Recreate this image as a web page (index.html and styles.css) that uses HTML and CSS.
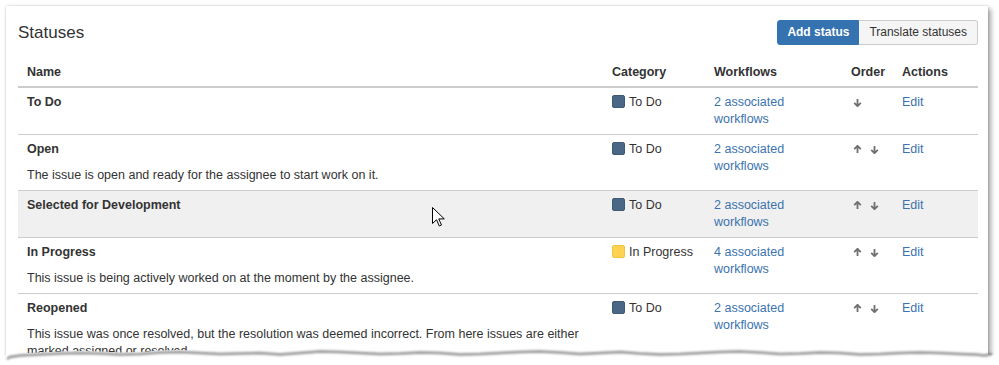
FILE: index.html
```html
<!DOCTYPE html>
<html lang="en">
<head>
    <meta charset="UTF-8">
    <title>Statuses</title>
    <link rel="stylesheet" href="styles.css">
</head>
<body>

    <div class="frame">
        <div class="card">
            <div class="page-header">
                <h2>Statuses</h2>
                <div class="buttons">
                    <button class="btn btn-primary">Add status</button>
                    <button class="btn">Translate statuses</button>
                </div>
            </div>

            <table class="statuses">
                <colgroup>
                    <col class="c-name">
                    <col class="c-cat">
                    <col class="c-wf">
                    <col class="c-order">
                    <col class="c-act">
                </colgroup>
                <thead>
                    <tr>
                        <th>Name</th>
                        <th>Category</th>
                        <th>Workflows</th>
                        <th>Order</th>
                        <th>Actions</th>
                    </tr>
                </thead>
                <tbody>
                    <tr>
                        <td><strong>To Do</strong></td>
                        <td><span class="cat todo"></span>To Do</td>
                        <td class="workflows"><a href="#">2 associated workflows</a></td>
                        <td class="order">
                            <svg class="arrow" viewBox="0 0 9 9"><path d="M4.5 1v7.5M1.2 4.8L4.5 8.2 7.8 4.8"/></svg>
                        </td>
                        <td><a href="#">Edit</a></td>
                    </tr>
                    <tr>
                        <td>
                            <strong>Open</strong>
                            <div class="desc">The issue is open and ready for the assignee to start work on it.</div>
                        </td>
                        <td><span class="cat todo"></span>To Do</td>
                        <td class="workflows"><a href="#">2 associated workflows</a></td>
                        <td class="order">
                            <svg class="arrow" viewBox="0 0 9 9"><path d="M4.5 8V0.5M1.2 4.2L4.5 0.8 7.8 4.2"/></svg>
                            <svg class="arrow" viewBox="0 0 9 9"><path d="M4.5 1v7.5M1.2 4.8L4.5 8.2 7.8 4.8"/></svg>
                        </td>
                        <td><a href="#">Edit</a></td>
                    </tr>
                    <tr class="hover">
                        <td><strong>Selected for Development</strong></td>
                        <td><span class="cat todo"></span>To Do</td>
                        <td class="workflows"><a href="#">2 associated workflows</a></td>
                        <td class="order">
                            <svg class="arrow" viewBox="0 0 9 9"><path d="M4.5 8V0.5M1.2 4.2L4.5 0.8 7.8 4.2"/></svg>
                            <svg class="arrow" viewBox="0 0 9 9"><path d="M4.5 1v7.5M1.2 4.8L4.5 8.2 7.8 4.8"/></svg>
                        </td>
                        <td><a href="#">Edit</a></td>
                    </tr>
                    <tr>
                        <td>
                            <strong>In Progress</strong>
                            <div class="desc">This issue is being actively worked on at the moment by the assignee.</div>
                        </td>
                        <td><span class="cat inprogress"></span>In Progress</td>
                        <td class="workflows"><a href="#">4 associated workflows</a></td>
                        <td class="order">
                            <svg class="arrow" viewBox="0 0 9 9"><path d="M4.5 8V0.5M1.2 4.2L4.5 0.8 7.8 4.2"/></svg>
                            <svg class="arrow" viewBox="0 0 9 9"><path d="M4.5 1v7.5M1.2 4.8L4.5 8.2 7.8 4.8"/></svg>
                        </td>
                        <td><a href="#">Edit</a></td>
                    </tr>
                    <tr>
                        <td>
                            <strong>Reopened</strong>
                            <div class="desc">This issue was once resolved, but the resolution was deemed incorrect. From here issues are either marked assigned or resolved.</div>
                        </td>
                        <td><span class="cat todo"></span>To Do</td>
                        <td class="workflows"><a href="#">2 associated workflows</a></td>
                        <td class="order">
                            <svg class="arrow" viewBox="0 0 9 9"><path d="M4.5 8V0.5M1.2 4.2L4.5 0.8 7.8 4.2"/></svg>
                            <svg class="arrow" viewBox="0 0 9 9"><path d="M4.5 1v7.5M1.2 4.8L4.5 8.2 7.8 4.8"/></svg>
                        </td>
                        <td><a href="#">Edit</a></td>
                    </tr>
                </tbody>
            </table>
        </div>
    </div>

    <!-- mouse pointer over the hovered row -->
    <svg class="cursor" width="13" height="20" viewBox="0 0 13 20">
        <path d="M0.5 0.5v16l4-3.8 2.8 6.3 2.2-1-2.8-6.1h5.6z" fill="#fff" stroke="#000" stroke-width="1" stroke-linejoin="round"/>
    </svg>

    <!-- torn paper edge at the bottom of the screenshot -->
    <svg class="torn" width="999" height="27" viewBox="0 0 999 27">
        <defs>
            <filter id="soft" x="-5%" y="-100%" width="110%" height="300%">
                <feGaussianBlur stdDeviation="1.3"/>
            </filter>
        </defs>
        <path fill="#fff" d="M0 18L10 17 20 15.5 40 14.5 60 13.5 80 13 100 13.5 120 14.5 140 14 160 12.5 180 12 200 13 220 14 240 13.5 260 13 280 14.5 300 13 320 11.5 340 12 360 13 380 14 400 13.5 420 12.5 440 13 460 14.5 480 14 500 13 520 12 540 11.5 560 12.5 580 14 600 13 620 12 640 13.5 660 14.5 680 14 700 13 720 12 740 11.5 760 12.5 780 14 800 13.5 820 12.5 840 13 860 14.5 880 14 900 13 920 12.5 940 13 960 14 975 14.5 985 15.5 990 17 999 17V27H0z"/>
        <path class="torn-shadow" filter="url(#soft)" d="M7 19L10 17 20 15.5 40 14.5 60 13.5 80 13 100 13.5 120 14.5 140 14 160 12.5 180 12 200 13 220 14 240 13.5 260 13 280 14.5 300 13 320 11.5 340 12 360 13 380 14 400 13.5 420 12.5 440 13 460 14.5 480 14 500 13 520 12 540 11.5 560 12.5 580 14 600 13 620 12 640 13.5 660 14.5 680 14 700 13 720 12 740 11.5 760 12.5 780 14 800 13.5 820 12.5 840 13 860 14.5 880 14 900 13 920 12.5 940 13 960 14 975 14.5 985 15.5 992 14"/>
    </svg>

</body>
</html>
```

FILE: styles.css
```css
html, body {
    height: 100%;
}

body {
    margin: 0;
    background-color: #fff;
    font-family: "Liberation Sans", Arial, sans-serif;
    font-size: 12.5px;
    line-height: 17px;
    color: #333;
    overflow: hidden;
    position: relative;
}

.frame {
    padding: 6px 11px 0 6px;
}

.card {
    width: 982px;
    height: 370px;
    box-sizing: border-box;
    padding: 14px 10px 0 12px;
    background-color: #fff;
    box-shadow: 0 0 2px rgba(0, 0, 0, 0.22), 3px 3px 5px rgba(0, 0, 0, 0.35);
    overflow: hidden;
}

.page-header {
    display: flex;
    justify-content: space-between;
    align-items: center;
    margin-bottom: 13px;
}

.page-header h2 {
    margin: 0;
    font-size: 17px;
    font-weight: normal;
    line-height: 25px;
    color: #333;
}

.buttons {
    display: flex;
}

.btn {
    height: 25px;
    box-sizing: border-box;
    padding: 0 10px;
    border: 1px solid #ccc;
    background-color: #f5f5f5;
    font-family: inherit;
    font-size: 12px;
    line-height: 23px;
    color: #333;
    border-radius: 0 3px 3px 0;
}

.btn-primary {
    background-color: #3572b0;
    border-color: #3572b0;
    color: #fff;
    font-weight: bold;
    border-radius: 3px 0 0 3px;
    padding: 0 9px;
}

.btn + .btn {
    border-left: 0;
}

.statuses {
    width: 100%;
    border-collapse: collapse;
    table-layout: fixed;
}

.c-name { width: 585px; }
.c-cat { width: 102px; }
.c-wf { width: 137px; }
.c-order { width: 51px; }
.c-act { width: 85px; }

.statuses th {
    text-align: left;
    font-weight: bold;
    padding: 6px 9px 5px;
    border-bottom: 2px solid #ccc;
}

.statuses td {
    padding: 6px 9px;
    vertical-align: top;
    border-bottom: 1px solid #ccc;
}

.statuses tr.hover td {
    background-color: #f0f0f0;
}

.desc {
    margin-top: 9px;
    max-width: 560px;
}

a {
    color: #3b73af;
    text-decoration: none;
}

.workflows a {
    display: inline-block;
    max-width: 95px;
}

.cat {
    display: inline-block;
    width: 13px;
    height: 13px;
    box-sizing: border-box;
    border-radius: 2px;
    margin-right: 4px;
    vertical-align: -2px;
}

.cat.todo {
    background-color: #4a6785;
    border: 1px solid #3f5a75;
}

.cat.inprogress {
    background-color: #ffd351;
    border: 1px solid #f2c443;
}

.order {
    white-space: nowrap;
}

.arrow {
    width: 9px;
    height: 9px;
    margin-left: 2px;
    margin-right: 3px;
    fill: none;
    stroke: #707070;
    stroke-width: 1.8;
    vertical-align: -1px;
}

.cursor {
    position: absolute;
    left: 432px;
    top: 207px;
}

.torn {
    position: absolute;
    left: 0;
    top: 338px;
}

.torn-shadow {
    fill: none;
    stroke: #6f6f6f;
    stroke-width: 2.4;
    opacity: 0.75;
    transform: translateY(2px);
}
```
